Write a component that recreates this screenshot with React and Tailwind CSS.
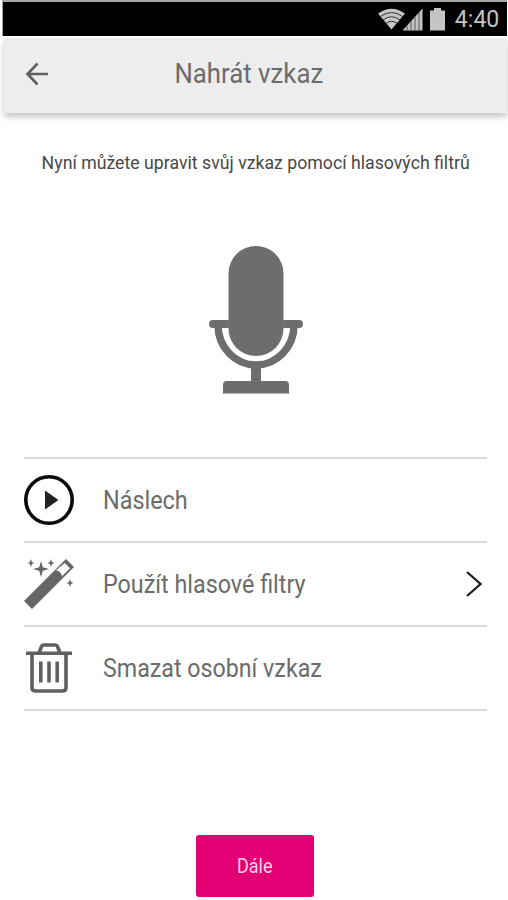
import React from "react";

const BackIcon = () => (
  <svg width="24" height="24" viewBox="0 0 24 24" fill="none" stroke="#5f5f5f" strokeWidth="2.6">
    <path d="M23 12H3M12.500 1.500L2.500 12l10 10.500" />
  </svg>
);

const StatusIcons = () => (
  <svg width="72" height="24" viewBox="0 0 72 24">
    <path d="M1 6.5Q14.500 -3 28 6.500L14.500 22.500z" fill="#c4c4c4" />
    <g fill="none" stroke="#333" strokeWidth="1">
      <path d="M3.500 9.500Q14.500 1.500 25.500 9.500" />
      <path d="M6 13Q14.500 6.500 23 13" />
      <path d="M9 16.500Q14.500 12 20 16.500" />
    </g>
    <path d="M25.500 23.500L45.500 1.500v22z" fill="#c4c4c4" />
    <path d="M30 18v6M34 14v10M38 9v15M42 5v19" stroke="#555" strokeWidth="1" />
    <path d="M53 3.500h4V1h7v2.500h4V23.500H53z" fill="#c4c4c4" />
  </svg>
);

const MicIcon = () => (
  <svg width="94" height="148" viewBox="0 0 94 148" fill="#6d6d6d">
    <rect x="19.500" y="0" width="55" height="110" rx="27.500" />
    <rect x="0" y="74" width="22" height="8" rx="4" />
    <rect x="72" y="74" width="22" height="8" rx="4" />
    <path d="M9 79a38 40 0 0 0 76 0" fill="none" stroke="#6d6d6d" strokeWidth="7.500" />
    <rect x="42" y="119" width="10" height="18" />
    <path d="M14 147.500V139q0-4 4-4h58q4 0 4 4v8.500z" />
  </svg>
);

const PlayIcon = () => (
  <svg width="50" height="50" viewBox="0 0 50 50">
    <circle cx="25" cy="25" r="23.200" fill="none" stroke="#0a0a0a" strokeWidth="3.600" />
    <path d="M21 15.500l13.500 9.500L21 34.500z" fill="#222" />
  </svg>
);

const WandIcon = () => (
  <svg width="50" height="50" viewBox="0 0 50 50" fill="#666">
    <path d="M42 0L50 8 8 50 0 42z" />
    <path d="M40.800 4L46 9.200l-8 8q-1-5-6-6z" fill="#fff" />
    <path d="M17 2l1.800 6.200L25 10l-6.200 1.800L17 18l-1.800-6.200L9 10l6.200-1.800z" />
    <path d="M7 0l1 3 2.500 1L8 5 7 8 6 5 3.500 4 6 3z" />
    <path d="M27 0l1 3 2.500 1L28 5l-1 3-1-3-2.500-1L26 3z" />
    <path d="M46 20l1 3 2.500 1L47 25l-1 3-1-3-2.500-1 2.500-1z" />
  </svg>
);

const TrashIcon = () => (
  <svg width="46" height="50" viewBox="0 0 46 50" fill="none" stroke="#606060" strokeWidth="3.600">
    <path d="M0 10.300h46M13 10l2.500-6.500q.6-1.500 2-1.500h12q1.400 0 2 1.500L34 10" />
    <path d="M6 10v34.500q0 3.500 3.500 3.500h27q3.500 0 3.500-3.500V10" />
    <path d="M14.800 18.500v21M23 18.500v21M31.200 18.500v21" />
  </svg>
);

const ChevronIcon = () => (
  <svg width="16" height="26" viewBox="0 0 16 26" fill="none" stroke="#1c1c1c" strokeWidth="2.200">
    <path d="M1 1l13.500 12L1 25" />
  </svg>
);

const items = [
  { label: "Náslech", icon: PlayIcon, scale: "scale-x-[0.9]" },
  { label: "Použít hlasové filtry", icon: WandIcon, scale: "scale-x-[0.897]", arrow: true },
  { label: "Smazat osobní vzkaz", icon: TrashIcon, scale: "scale-x-[0.893]" },
];

const App = () => {
  return (
    <div className="w-[508px] h-[900px] bg-white overflow-hidden flex flex-col font-['Roboto',sans-serif]">
      <div className="h-9 shrink-0 ml-0.5 mr-px bg-black border-t-2 border-l border-[#a5a5a5] flex items-center justify-end pr-2">
        <StatusIcons />
        <span className="ml-1 text-[24px] leading-none text-[#c4c4c4] origin-right whitespace-nowrap scale-x-[0.96]">4:40</span>
      </div>

      <header className="mt-0.5 ml-1 mr-px h-[75px] shrink-0 bg-[#ededed] shadow-[0_4px_6px_rgba(0,0,0,0.22)] grid grid-cols-[1fr_auto_1fr] items-center pl-[21px] pr-[34px] pb-[3px]">
        <button type="button"><BackIcon /></button>
        <h1 className="text-[28px] leading-none text-[#6b6b6b] whitespace-nowrap scale-x-[0.92]">Nahrát vzkaz</h1>
      </header>

      <p className="mt-9 pl-[3px] h-[28px] text-[19px] leading-[28px] text-[#484848] whitespace-nowrap flex justify-center">
        <span className="scale-x-[0.932]">Nyní můžete upravit svůj vzkaz pomocí hlasových filtrů</span>
      </p>

      <div className="mt-[69px] h-[148px] pl-1 flex justify-center">
        <MicIcon />
      </div>

      <ul className="mt-[63px] ml-6 mr-[21px] border-t-2 border-[#d9d9d9]">
        {items.map(({ label, icon: Icon, scale, arrow }) => (
          <li key={label} className="h-[84px] border-b-2 border-[#d9d9d9] flex items-center">
            <span className="w-[79px] shrink-0 flex">
              <span className="w-[50px] flex justify-center"><Icon /></span>
            </span>
            <span className={`text-[26px] leading-none text-[#6b6b6b] whitespace-nowrap origin-left ${scale}`}>{label}</span>
            {arrow && <span className="ml-auto mr-[5px]"><ChevronIcon /></span>}
          </li>
        ))}
      </ul>

      <button
        type="button"
        className="mt-auto mb-[3px] ml-[196px] w-[118px] h-[62px] shrink-0 rounded-[3px] bg-[#e20074] text-[20px] text-[#fbd3e8] flex items-center justify-center"
      >
        <span className="scale-x-[0.9]">Dále</span>
      </button>
    </div>
  );
};
export default App;
